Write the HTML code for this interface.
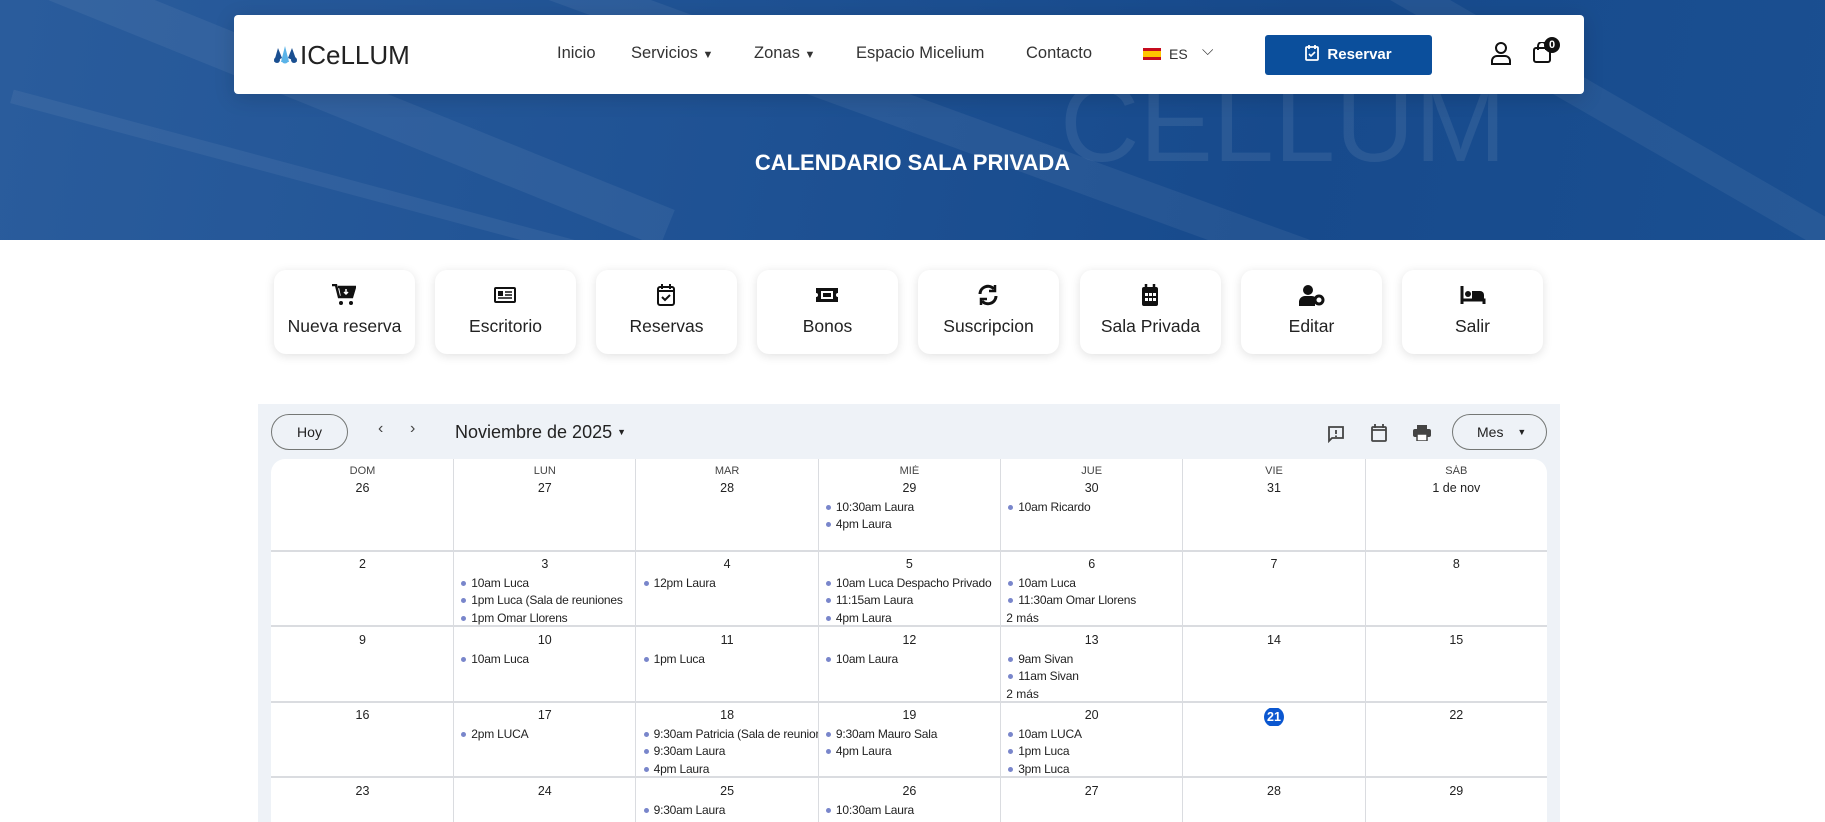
<!DOCTYPE html>
<html><head><meta charset="utf-8">
<style>
*{box-sizing:border-box;margin:0;padding:0}
body{width:1825px;height:822px;overflow:hidden;background:#fff;font-family:"Liberation Sans",sans-serif;position:relative}
.hero{position:absolute;left:0;top:0;width:1825px;height:240px;background:linear-gradient(100deg,#2a5c9c 0%,#1f5294 40%,#174a8c 70%,#1a4f91 100%);overflow:hidden}
.band{position:absolute;background:rgba(255,255,255,0.06)}
.nav{position:absolute;left:234px;top:15px;width:1350px;height:79px;background:#fff;border-radius:4px;box-shadow:0 4px 20px rgba(0,0,0,.15)}
.nav a{position:absolute;top:29px;font-size:16.5px;color:#333;text-decoration:none}
.title{position:absolute;top:150px;width:100%;text-align:center;color:#fff;font-weight:bold;font-size:22px}
.btn{position:absolute;top:270px;width:141px;height:84px;background:#fff;border-radius:12px;box-shadow:0 2px 10px rgba(0,0,0,.12);text-align:center}
.btn svg{position:absolute;left:58px;top:14px}
.btn span{position:absolute;left:0;right:0;top:46px;font-size:17.5px;color:#222}
.cal{position:absolute;left:258px;top:404px;width:1302px;height:418px;background:#eef2f7}
.grid{position:absolute;left:271px;top:459px;width:1276px;height:363px;background:#fff;border-radius:14px 14px 0 0;overflow:hidden}
.vl{position:absolute;top:0;bottom:0;width:1px;background:#dadce0}
.hl{position:absolute;left:0;right:0;height:2px;background:#dadce0}
.c{position:absolute;width:181px;font-size:12px;color:#3c4043;overflow:hidden}
.dn{text-align:center;font-size:12.5px;color:#222}
.ev{white-space:nowrap;overflow:hidden;height:17.3px;line-height:17.3px;padding-left:7px;color:#222;letter-spacing:-0.2px}
.ev::before{content:"";display:inline-block;width:5px;height:5px;border-radius:50%;background:#7986cb;margin-right:5px;vertical-align:1px}
.more{padding-left:5px;height:17.3px;line-height:17.3px;color:#222}
</style></head><body>
<div class="hero">
<div class="band" style="left:-200px;top:40px;width:900px;height:40px;transform:rotate(22deg)"></div>
<div class="band" style="left:200px;top:110px;width:1500px;height:35px;transform:rotate(20deg)"></div>
<div class="band" style="left:1100px;top:60px;width:900px;height:30px;transform:rotate(30deg)"></div>
<div class="band" style="left:0;top:180px;width:700px;height:14px;transform:rotate(15deg)"></div>
<div style="position:absolute;left:1060px;top:60px;color:rgba(255,255,255,.08);font-size:110px;font-weight:300">CELLUM</div>
</div>
<div class="title">CALENDARIO SALA PRIVADA</div>
<div class="nav">
<svg style="position:absolute;left:38px;top:29px" width="28" height="20" viewBox="0 0 28 20"><path d="M2 18 L6 4 L10 14 Z" fill="#1a4f91"/><path d="M9 18 L13 2 L17 18 Z" fill="#5ab3e8"/><path d="M16 14 L20 4 L25 18 Z" fill="#1a4f91"/><circle cx="5" cy="16" r="3" fill="#1a4f91"/><circle cx="13" cy="16" r="3.5" fill="#5ab3e8"/><circle cx="22" cy="16" r="3" fill="#1a4f91"/></svg>
<div style="position:absolute;left:66px;top:25px;font-size:26px;color:#222;letter-spacing:0;font-weight:300">ICeLLUM</div>
<a style="left:323px">Inicio</a>
<a style="left:397px">Servicios <small style="font-size:11px">▼</small></a>
<a style="left:520px">Zonas <small style="font-size:11px">▼</small></a>
<a style="left:622px">Espacio Micelium</a>
<a style="left:792px">Contacto</a>
<div style="position:absolute;left:909px;top:33px;width:18px;height:12px;background:linear-gradient(#c60b1e 25%,#ffc400 25%,#ffc400 75%,#c60b1e 75%)"></div>
<a style="left:935px;font-size:14px;top:31px">ES</a>
<a style="left:968px;top:27px;font-size:15px">⌵</a>
<div style="position:absolute;left:1031px;top:20px;width:167px;height:40px;background:#0b4f9c;border-radius:3px;color:#fff;font-weight:bold;font-size:15px;line-height:40px;text-align:center">
<svg width="14" height="16" viewBox="0 0 14 16" style="vertical-align:-2px;margin-right:8px"><rect x="1" y="2" width="12" height="13" rx="1" fill="none" stroke="#fff" stroke-width="1.8"/><path d="M4 0v4M10 0v4" stroke="#fff" stroke-width="1.8"/><path d="M4 9l2 2 4-4" stroke="#fff" stroke-width="1.6" fill="none"/></svg>Reservar</div>
<svg style="position:absolute;left:1256px;top:26px" width="22" height="24" viewBox="0 0 22 24" fill="none" stroke="#111" stroke-width="2"><circle cx="11" cy="7" r="5"/><path d="M2 23v-3a5 5 0 0 1 5-5h8a5 5 0 0 1 5 5v3z"/></svg>
<svg style="position:absolute;left:1298px;top:27px" width="20" height="22" viewBox="0 0 20 22" fill="none" stroke="#111" stroke-width="2"><rect x="2" y="6" width="16" height="14" rx="2"/><path d="M6 8V4a4 4 0 0 1 8 0v4"/></svg>
<div style="position:absolute;left:1310px;top:22px;width:16px;height:16px;border-radius:50%;background:#111;color:#fff;font-size:11px;font-weight:bold;text-align:center;line-height:16px">0</div>
</div>

<div class="btn" style="left:274px"><svg width="24" height="22" viewBox="0 0 24 22"><path d="M0 1h4l3 12h13l3-10H6" fill="none" stroke="#111" stroke-width="2.5"/><path d="M7 3h15l-3 10H9z" fill="#111"/><circle cx="9" cy="19" r="2" fill="#111"/><circle cx="19" cy="19" r="2" fill="#111"/><path d="M14 5v5M12 8l2 2 2-2" stroke="#fff" stroke-width="1.5" fill="none"/></svg><span>Nueva reserva</span></div>
<div class="btn" style="left:435px"><svg width="24" height="22" viewBox="0 0 24 22"><rect x="2" y="4" width="20" height="14" rx="1" fill="none" stroke="#111" stroke-width="2"/><rect x="5" y="7" width="5" height="5" fill="#111"/><path d="M12 8h7M12 11h7M5 14h14" stroke="#111" stroke-width="1.6"/></svg><span>Escritorio</span></div>
<div class="btn" style="left:596px"><svg width="24" height="22" viewBox="0 0 24 22"><rect x="4" y="3" width="16" height="18" rx="2" fill="none" stroke="#111" stroke-width="2"/><path d="M8 0v5M16 0v5M4 7h16" stroke="#111" stroke-width="2"/><path d="M8 13l3 3 5-5" stroke="#111" stroke-width="2" fill="none"/></svg><span>Reservas</span></div>
<div class="btn" style="left:757px"><svg width="24" height="22" viewBox="0 0 24 22"><path d="M1 4h22v5a2 2 0 0 0 0 4v5H1v-5a2 2 0 0 0 0-4z" fill="#111"/><rect x="6" y="7" width="12" height="8" fill="#fff"/><rect x="8" y="9" width="8" height="4" fill="#111"/></svg><span>Bonos</span></div>
<div class="btn" style="left:918px"><svg width="24" height="22" viewBox="0 0 24 22" fill="none" stroke="#111" stroke-width="3"><path d="M4 10a8 8 0 0 1 14-5"/><path d="M20 12a8 8 0 0 1-14 5"/><path d="M19 1v6h-6M5 21v-6h6" stroke-width="2.5"/></svg><span>Suscripcion</span></div>
<div class="btn" style="left:1080px"><svg width="24" height="22" viewBox="0 0 24 22"><path d="M8 0v4M16 0v4" stroke="#111" stroke-width="2.5"/><rect x="4" y="3" width="16" height="19" rx="2" fill="#111"/><g fill="#fff"><rect x="7" y="9" width="3" height="3"/><rect x="11" y="9" width="3" height="3"/><rect x="15" y="9" width="3" height="3"/><rect x="7" y="14" width="3" height="3"/><rect x="11" y="14" width="3" height="3"/><rect x="15" y="14" width="3" height="3"/></g></svg><span>Sala Privada</span></div>
<div class="btn" style="left:1241px"><svg width="26" height="22" viewBox="0 0 26 22"><circle cx="9" cy="6" r="5" fill="#111"/><path d="M0 22v-4a6 6 0 0 1 6-6h6a6 6 0 0 1 4 1v9z" fill="#111"/><circle cx="20" cy="16" r="4" fill="none" stroke="#111" stroke-width="3"/></svg><span>Editar</span></div>
<div class="btn" style="left:1402px"><svg width="26" height="22" viewBox="0 0 26 22"><path d="M2 2v18M2 16h22v4" stroke="#111" stroke-width="3" fill="none"/><circle cx="8" cy="10" r="3" fill="#111"/><path d="M12 7h8a4 4 0 0 1 4 4v4H12z" fill="#111"/></svg><span>Salir</span></div>

<div class="cal">
<div style="position:absolute;left:13px;top:10px;width:77px;height:36px;border:1px solid #747775;border-radius:18px;text-align:center;line-height:34px;font-size:14px;color:#222">Hoy</div>
<div style="position:absolute;left:120px;top:16px;font-size:16px;color:#444">‹</div>
<div style="position:absolute;left:152px;top:16px;font-size:16px;color:#444">›</div>
<div style="position:absolute;left:197px;top:18px;font-size:18px;color:#222">Noviembre de 2025 <small style="font-size:9px;vertical-align:3px">▼</small></div>
<svg style="position:absolute;left:1069px;top:21px" width="18" height="18" viewBox="0 0 18 18" fill="none" stroke="#444" stroke-width="1.8"><path d="M2 2h14v11H5l-3 3z"/><path d="M9 5v4M9 10.5v1.5"/></svg>
<svg style="position:absolute;left:1113px;top:20px" width="16" height="18" viewBox="0 0 16 18" fill="none" stroke="#444" stroke-width="1.8"><rect x="1" y="3" width="14" height="14" rx="1"/><path d="M4 0v4M12 0v4M1 6h14"/></svg>
<svg style="position:absolute;left:1155px;top:21px" width="18" height="16" viewBox="0 0 18 16"><rect x="4" y="0" width="10" height="4" fill="#444"/><rect x="0" y="4" width="18" height="8" rx="2" fill="#444"/><rect x="4" y="9" width="10" height="7" fill="#fff" stroke="#444" stroke-width="1.5"/></svg>
<div style="position:absolute;left:1194px;top:10px;width:95px;height:36px;border:1px solid #747775;border-radius:18px;font-size:14px;color:#222;line-height:34px;padding-left:24px">Mes <small style="font-size:9px;margin-left:10px;vertical-align:2px">▼</small></div>
</div>

<div class="grid">
<div class="vl" style="left:182px"></div><div class="vl" style="left:364px"></div><div class="vl" style="left:547px"></div><div class="vl" style="left:729px"></div><div class="vl" style="left:911px"></div><div class="vl" style="left:1094px"></div>
<div class="hl" style="top:91px"></div><div class="hl" style="top:166px"></div><div class="hl" style="top:242px"></div><div class="hl" style="top:317px"></div>
</div>
<div id="cells"></div>
<script>
const L=271,W=182.3;
const hdr=["DOM","LUN","MAR","MIÉ","JUE","VIE","SÁB"];
const rows=[
{top:459,days:["26","27","28","29","30","31","1 de nov"],ev:[[],[],[],["10:30am Laura","4pm Laura"],["10am Ricardo"],[],[]]},
{top:551,days:["2","3","4","5","6","7","8"],ev:[[],["10am Luca","1pm Luca (Sala de reuniones","1pm Omar Llorens"],["12pm Laura"],["10am Luca Despacho Privado","11:15am Laura","4pm Laura"],["10am Luca","11:30am Omar Llorens","+2 más"],[],[]]},
{top:627,days:["9","10","11","12","13","14","15"],ev:[[],["10am Luca"],["1pm Luca"],["10am Laura"],["9am Sivan","11am Sivan","+2 más"],[],[]]},
{top:702,days:["16","17","18","19","20","21","22"],ev:[[],["2pm LUCA"],["9:30am Patricia (Sala de reuniones","9:30am Laura","4pm Laura"],["9:30am Mauro Sala","4pm Laura"],["10am LUCA","1pm Luca","3pm Luca"],[],[]]},
{top:778,days:["23","24","25","26","27","28","29"],ev:[[],[],["9:30am Laura"],["10:30am Laura"],[],[],[]]}];
let h="";
rows.forEach((r,ri)=>{r.days.forEach((d,i)=>{
 let x=L+i*W+1, y=r.top;
 let s='<div class="c" style="left:'+x+'px;top:'+(y+(ri==0?6:6))+'px">';
 if(ri==0)s+='<div class="dn" style="font-size:11px;color:#444;height:16px">'+hdr[i]+'</div>';
 if(d=="21")s+='<div class="dn" style="height:17px"><span style="display:inline-block;width:20px;height:20px;border-radius:50%;background:#0b57d0;color:#fff;font-weight:bold;line-height:20px;margin-top:-1px">21</span></div>';
 else s+='<div class="dn" style="height:17px">'+d+'</div>';
 s+='<div style="height:1px"></div>';
 r.ev[i].forEach(e=>{ if(e[0]=="+")s+='<div class="more">'+e.slice(1)+'</div>'; else s+='<div class="ev">'+e+'</div>';});
 s+='</div>';h+=s;});});
document.getElementById("cells").innerHTML=h;
</script>
</body></html>
